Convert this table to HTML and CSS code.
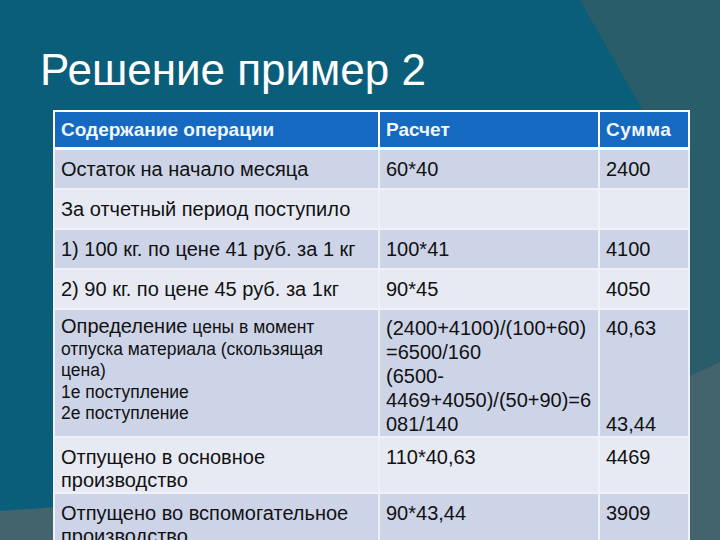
FILE: index.html
```html
<!DOCTYPE html>
<html lang="ru">
<head>
<meta charset="utf-8">
<title>Решение пример 2</title>
<link rel="stylesheet" href="styles.css">
</head>
<body>
<svg class="bg" width="720" height="540" viewBox="0 0 720 540" aria-hidden="true">
  <rect x="0" y="0" width="720" height="540" fill="#0b5e79"/>
  <path d="M580 0 L720 0 L720 370 L688 380 L688 190 Z" fill="#295d6a"/>
  <path d="M0 511 Q 480 480 720 362 L720 540 L0 540 Z" fill="#43636d"/>
</svg>
<main class="slide">
  <h1 class="title">Решение пример 2</h1>
  <table class="grid">
    <colgroup>
      <col class="c1"><col class="c2"><col class="c3">
    </colgroup>
    <thead>
      <tr><th>Содержание операции</th><th>Расчет</th><th class="wide">Сумма</th></tr>
    </thead>
    <tbody>
      <tr class="dark"><td>Остаток на начало месяца</td><td>60*40</td><td>2400</td></tr>
      <tr class="light"><td>За отчетный период поступило</td><td></td><td></td></tr>
      <tr class="dark"><td>1) 100 кг. по цене 41 руб. за 1 кг</td><td>100*41</td><td>4100</td></tr>
      <tr class="light"><td>2) 90 кг. по цене 45 руб. за 1кг</td><td>90*45</td><td>4050</td></tr>
      <tr class="dark tall">
        <td class="small"><span class="big">Определение</span> цены в момент<br>отпуска материала (скользящая<br>цена)<br>1е поступление<br>2е поступление</td>
        <td class="calc">(2400+4100)/(100+60)<br>=6500/160<br>(6500-<br>4469+4050)/(50+90)=6<br>081/140</td>
        <td class="calc">40,63<br><br><br><br>43,44</td>
      </tr>
      <tr class="light two"><td>Отпущено в основное<br>производство</td><td>110*40,63</td><td>4469</td></tr>
      <tr class="dark two"><td>Отпущено во вспомогательное<br>производство</td><td>90*43,44</td><td>3909</td></tr>
    </tbody>
  </table>
</main>
</body>
</html>
```
FILE: styles.css
```css
html, body {
  margin: 0;
  padding: 0;
  width: 720px;
  height: 540px;
  overflow: hidden;
  background: #0b5e79;
  font-family: "Liberation Sans", Arial, sans-serif;
}
.bg {
  position: absolute;
  left: 0;
  top: 0;
  z-index: 0;
}
.slide {
  position: relative;
  z-index: 1;
  padding: 45px 0 0 0;
}
.title {
  margin: 0 0 15px 40px;
  font-weight: normal;
  font-size: 44px;
  line-height: 50px;
  color: #ffffff;
}
.grid {
  margin-left: 53px;
  width: 635px;
  border-collapse: collapse;
  table-layout: fixed;
  border: 1px solid #ffffff;
}
.c1 { width: 325px; }
.c2 { width: 220px; }
.c3 { width: 90px; }
.grid th, .grid td {
  border: 2px solid #eef1f7;
  text-align: left;
  vertical-align: top;
  font-size: 20px;
  line-height: 23px;
  padding: 8px 4px 7px 6px;
  color: #111111;
  white-space: nowrap;
}
.grid th {
  background: #1569c0;
  color: #f2f6ff;
  font-weight: bold;
  font-size: 19px;
  border-color: #ffffff;
  border-bottom-width: 3px;
  padding-top: 6px;
  padding-bottom: 6px;
}
.grid th.wide { letter-spacing: 0.6px; }
.dark td { background: #cdd4e8; }
.light td { background: #e7eaf3; }
.two td { padding-bottom: 0; }
.tall td { padding-top: 6px; padding-bottom: 0; }
.grid td.small {
  font-size: 17.5px;
  line-height: 21.5px;
}
.grid td.small .big { font-size: 20px; }
.grid td.calc {
  line-height: 24px;
}
```
